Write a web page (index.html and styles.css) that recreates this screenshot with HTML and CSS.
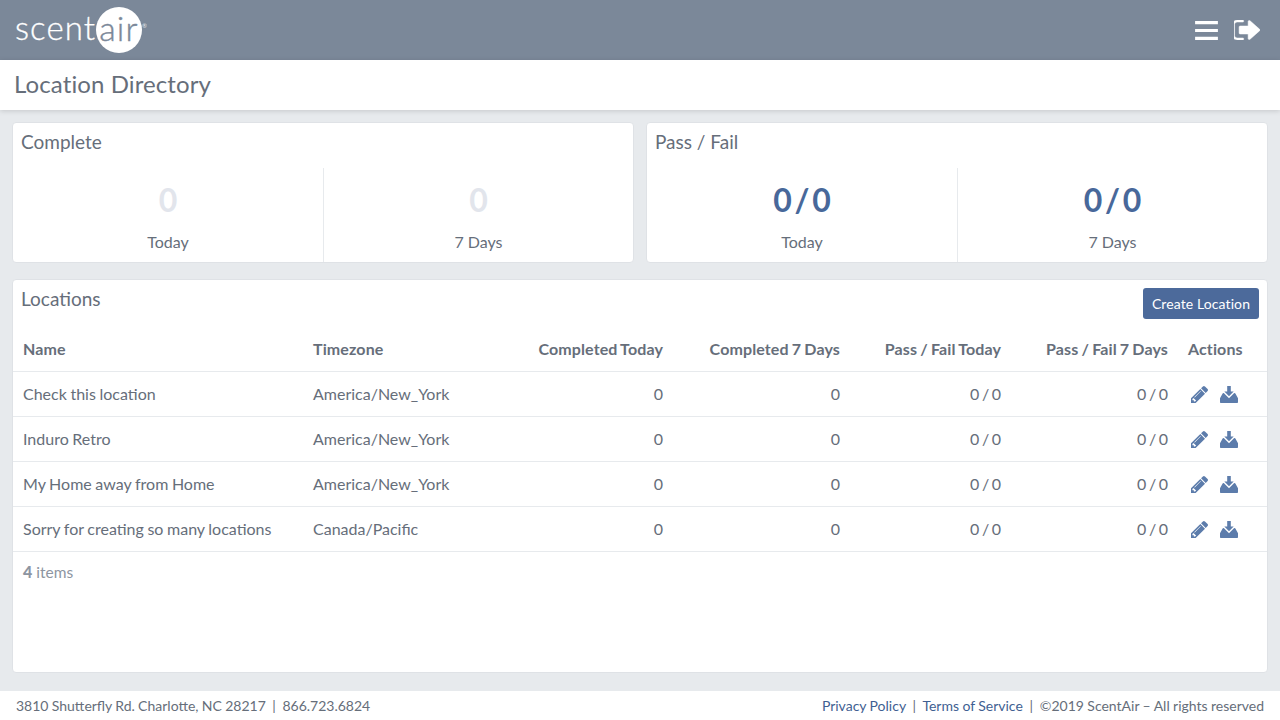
FILE: index.html
```html
<!DOCTYPE html>
<html lang="en">

<head>
    <meta charset="UTF-8">
    <title>Location Directory</title>
    <link rel="stylesheet" href="styles.css">
</head>

<body>
<svg class="sprites" width="0" height="0">
    <symbol id="i-edit" viewBox="128 149 1515 1515"><path d="M491 1536l91-91-235-235-91 91v107h128v128h107zm523-928q0-22-22-22-10 0-17 7l-542 542q-7 7-7 17 0 22 22 22 10 0 17-7l542-542q7-7 7-17zm-54-192l416 416-832 832h-416v-416zm683 96q0 53-37 90l-166 166-416-416 166-165q36-38 90-38 53 0 91 38l235 234q37 39 37 91z"/></symbol>
    <symbol id="i-down" viewBox="0 0 18 17"><path d="M7.200 0h3.600v5.400h2.900L9 10.200 4.300 5.400h2.900zM3.600 7h.2L9 12.200 14.200 7h.2c.5 0 .8.2 1 .6L18 12.300V16c0 .6-.4 1-1 1H1c-.6 0-1-.4-1-1v-3.700L2.600 7.600c.2-.4.5-.6 1-.6z"/></symbol>
</svg>

<header class="topbar">
    <div class="logo">
        <span class="logo-scent">scent</span>
        <span class="logo-air">air</span>
        <span class="logo-reg">®</span>
    </div>
    <div class="topbar-icons">
        <svg class="icon-menu" viewBox="0 0 24 20"><path d="M0 0h24v3.400H0zM0 8.300h24v3.400H0zM0 16.600h24V20H0z"/></svg>
        <svg class="icon-exit" viewBox="160 256 1472 1280" preserveAspectRatio="none"><path d="M704 1440q0 4 1 20t.5 26.5-3 23.5-10 19.5-20.5 6.5h-320q-119 0-203.5-84.5t-84.5-203.5v-704q0-119 84.5-203.5t203.5-84.5h320q13 0 22.5 9.5t9.5 22.5q0 4 1 20t.5 26.5-3 23.5-10 19.5-20.5 6.5h-320q-66 0-113 47t-47 113v704q0 66 47 113t113 47h312l11.5 1 11.5 3 8 5.5 7 9 2 13.5zm928-544q0 26-19 45l-544 544q-19 19-45 19t-45-19-19-45v-288h-448q-26 0-45-19t-19-45v-384q0-26 19-45t45-19h448v-288q0-26 19-45t45-19 45 19l544 544q19 19 19 45z"/></svg>
    </div>
</header>

<div class="titlebar">
    <h1>Location Directory</h1>
</div>

<main class="content">
    <div class="stat-row">
        <section class="card">
            <h2>Complete</h2>
            <div class="stat-split">
                <div class="stat">
                    <div class="stat-num muted">0</div>
                    <div class="stat-label">Today</div>
                </div>
                <div class="stat">
                    <div class="stat-num muted">0</div>
                    <div class="stat-label">7 Days</div>
                </div>
            </div>
        </section>
        <section class="card">
            <h2>Pass / Fail</h2>
            <div class="stat-split">
                <div class="stat">
                    <div class="stat-num">0 / 0</div>
                    <div class="stat-label">Today</div>
                </div>
                <div class="stat">
                    <div class="stat-num">0 / 0</div>
                    <div class="stat-label">7 Days</div>
                </div>
            </div>
        </section>
    </div>

    <section class="card locations">
        <div class="locations-head">
            <h2>Locations</h2>
            <button class="btn-create">Create Location</button>
        </div>
        <table class="loc-table">
            <colgroup>
                <col class="col-name">
                <col class="col-tz">
                <col class="col-ct">
                <col class="col-c7">
                <col class="col-pt">
                <col class="col-p7">
                <col class="col-act">
            </colgroup>
            <thead>
                <tr>
                    <th>Name</th>
                    <th>Timezone</th>
                    <th class="num">Completed Today</th>
                    <th class="num">Completed 7 Days</th>
                    <th class="num">Pass / Fail Today</th>
                    <th class="num">Pass / Fail 7 Days</th>
                    <th class="act">Actions</th>
                </tr>
            </thead>
            <tbody>
                <tr>
                    <td class="name">Check this location</td>
                    <td>America/New_York</td>
                    <td class="num">0</td>
                    <td class="num">0</td>
                    <td class="num ratio">0 / 0</td>
                    <td class="num ratio">0 / 0</td>
                    <td class="act">
                        <svg class="icon-edit"><use href="#i-edit"/></svg>
                        <svg class="icon-down"><use href="#i-down"/></svg>
                    </td>
                </tr>
                <tr>
                    <td class="name">Induro Retro</td>
                    <td>America/New_York</td>
                    <td class="num">0</td>
                    <td class="num">0</td>
                    <td class="num ratio">0 / 0</td>
                    <td class="num ratio">0 / 0</td>
                    <td class="act">
                        <svg class="icon-edit"><use href="#i-edit"/></svg>
                        <svg class="icon-down"><use href="#i-down"/></svg>
                    </td>
                </tr>
                <tr>
                    <td class="name">My Home away from Home</td>
                    <td>America/New_York</td>
                    <td class="num">0</td>
                    <td class="num">0</td>
                    <td class="num ratio">0 / 0</td>
                    <td class="num ratio">0 / 0</td>
                    <td class="act">
                        <svg class="icon-edit"><use href="#i-edit"/></svg>
                        <svg class="icon-down"><use href="#i-down"/></svg>
                    </td>
                </tr>
                <tr>
                    <td class="name">Sorry for creating so many locations</td>
                    <td>Canada/Pacific</td>
                    <td class="num">0</td>
                    <td class="num">0</td>
                    <td class="num ratio">0 / 0</td>
                    <td class="num ratio">0 / 0</td>
                    <td class="act">
                        <svg class="icon-edit"><use href="#i-edit"/></svg>
                        <svg class="icon-down"><use href="#i-down"/></svg>
                    </td>
                </tr>
            </tbody>
        </table>
        <div class="item-count"><b>4</b> items</div>
    </section>
</main>

<footer class="footer">
    <div class="footer-left">3810 Shutterfly Rd. Charlotte, NC 28217 &nbsp;|&nbsp; 866.723.6824</div>
    <div class="footer-right"><a href="#">Privacy Policy</a> &nbsp;|&nbsp; <a href="#">Terms of Service</a> &nbsp;|&nbsp; ©2019 ScentAir – All rights reserved</div>
</footer>
</body>

</html>
```

FILE: styles.css
```css
* {
    box-sizing: border-box;
}

body {
    font-family: 'Lato', sans-serif;
    color: #666e7a;
    background-color: #e7eaed;
    height: 720px;
    margin: 0;
    display: flex;
    flex-direction: column;
    overflow: hidden;
}

.sprites {
    position: absolute;
}

.topbar {
    height: 60px;
    flex: none;
    background-color: #7b8899;
    display: flex;
    justify-content: space-between;
    align-items: center;
    padding: 0 20px 0 15px;
}

.logo {
    display: flex;
    align-items: center;
    color: #fff;
}

.logo-scent {
    width: 81px;
    font-size: 33px;
    font-weight: 300;
    letter-spacing: 1.1px;
    line-height: 46px;
    padding-bottom: 6px;
    white-space: nowrap;
    -webkit-text-stroke: .3px #fff;
}

.logo-air {
    width: 46px;
    height: 46px;
    border-radius: 50%;
    background-color: #fff;
    color: #7b8899;
    font-size: 34px;
    font-weight: 300;
    letter-spacing: 1.2px;
    line-height: 41px;
    text-align: center;
    -webkit-text-stroke: .4px #7b8899;
}

.logo-reg {
    font-size: 6px;
    align-self: flex-start;
    margin-top: 18px;
    opacity: .8;
}

.topbar-icons {
    display: flex;
    align-items: center;
    gap: 16px;
}

.topbar-icons svg {
    fill: #fff;
    display: block;
}

.icon-menu {
    width: 23px;
    height: 19px;
}

.icon-exit {
    width: 26px;
    height: 20px;
    stroke: #fff;
    stroke-width: 30;
}

.titlebar {
    height: 50px;
    flex: none;
    background-color: #fff;
    box-shadow: 0 1px 5px rgba(0, 0, 0, .15);
    padding: 0 14px 4px;
    display: flex;
    align-items: center;
}

h1 {
    font-size: 24px;
    font-weight: 400;
    letter-spacing: .1px;
    margin: 0;
}

.content {
    flex: 1;
    padding: 12px 12px 18px;
    display: flex;
    flex-direction: column;
    gap: 16px;
}

.card {
    background-color: #fff;
    border: 1px solid #dfe2e6;
    border-radius: 4px;
}

.card h2 {
    font-size: 19px;
    font-weight: 400;
    line-height: 24px;
    margin: 0;
}

.stat-row {
    display: grid;
    grid-template-columns: 1fr 1fr;
    gap: 12px;
    height: 141px;
}

.stat-row .card {
    display: flex;
    flex-direction: column;
    padding-top: 7px;
}

.stat-row h2 {
    padding: 0 8px;
}

.stat-split {
    flex: 1;
    display: grid;
    grid-template-columns: 1fr 1fr;
    margin-top: 14px;
}

.stat {
    text-align: center;
    padding-top: 12px;
}

.stat + .stat {
    border-left: 1px solid #e7eaed;
}

.stat-num {
    font-size: 32px;
    font-weight: 700;
    line-height: 40px;
    color: #48689a;
    word-spacing: -5px;
}

.stat-num.muted {
    color: #e2e5ec;
}

.stat-label {
    font-size: 16px;
    line-height: 20px;
    margin-top: 12px;
}

.locations {
    flex: 1;
}

.locations-head {
    display: flex;
    justify-content: space-between;
    padding: 7px 8px 0;
    height: 47px;
}

.btn-create {
    font-family: inherit;
    font-size: 14px;
    letter-spacing: .1px;
    color: #fff;
    background-color: #4c6a9b;
    border: none;
    border-radius: 3px;
    width: 116px;
    height: 31px;
    margin-top: 1px;
    padding: 0;
    cursor: pointer;
}

.loc-table {
    width: 1254px;
    table-layout: fixed;
    border-collapse: collapse;
    font-size: 16px;
}

.col-name { width: 290px; }
.col-tz { width: 200px; }
.col-ct { width: 170px; }
.col-c7 { width: 177px; }
.col-pt { width: 161px; }
.col-p7 { width: 167px; }
.col-act { width: 89px; }

.loc-table th,
.loc-table td {
    padding: 0 10px;
    text-align: left;
    height: 45px;
    white-space: nowrap;
    border-bottom: 1px solid #e7eaed;
}

.loc-table th {
    font-weight: 700;
    height: 44px;
    letter-spacing: .12px;
    word-spacing: -.9px;
}

.loc-table .num {
    text-align: right;
}

.loc-table .name {
    word-spacing: -.5px;
}

.loc-table .ratio {
    word-spacing: -1.5px;
}

.loc-table td.act {
    padding-left: 13px;
    vertical-align: middle;
}

.act svg {
    fill: #5c7cab;
    vertical-align: middle;
}

.icon-edit {
    width: 17px;
    height: 17px;
    margin: 0 8px 1px 0;
}

.icon-down {
    width: 18px;
    height: 17px;
    margin-bottom: 1px;
}

.item-count {
    padding: 10px;
    font-size: 15.5px;
    line-height: 20px;
    color: #8d95a1;
}

.item-count b {
    font-size: 16px;
    font-weight: 900;
}

.footer {
    height: 29px;
    flex: none;
    background-color: #fff;
    display: flex;
    justify-content: space-between;
    align-items: center;
    padding: 0 16px;
    font-size: 14px;
}

.footer-left {
    word-spacing: -.3px;
}

.footer-right {
    word-spacing: -.2px;
}

.footer a {
    color: #3f5f92;
    text-decoration: none;
}
```
